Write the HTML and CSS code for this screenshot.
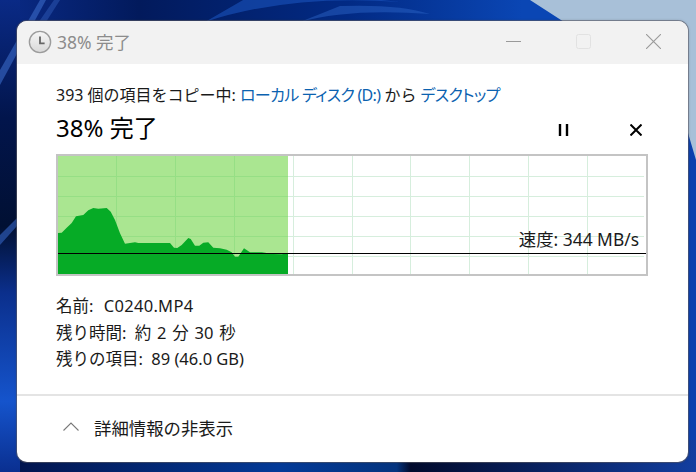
FILE: index.html
```html
<!DOCTYPE html>
<html lang="ja">
<head>
    <meta charset="UTF-8">
    <meta name="viewport" content="width=device-width, initial-scale=1.0">
    <title>38% 完了</title>
    <link rel="stylesheet" href="styles.css">
</head>
<body>
    <!-- wallpaper -->
    <svg class="wallpaper" viewBox="0 0 696 472" preserveAspectRatio="none">
        <defs>
            <linearGradient id="topBlue" x1="0" y1="0" x2="1" y2="0">
                <stop offset="0" stop-color="#0a2a86"/>
                <stop offset="0.2" stop-color="#021a5c"/>
                <stop offset="0.5" stop-color="#022a84"/>
                <stop offset="0.75" stop-color="#0a46b4"/>
                <stop offset="1" stop-color="#0a46b4"/>
            </linearGradient>
            <linearGradient id="bottomBlue" x1="0" y1="0" x2="1" y2="0">
                <stop offset="0" stop-color="#02124a"/>
                <stop offset="0.4" stop-color="#033a98"/>
                <stop offset="0.57" stop-color="#04347f"/>
                <stop offset="0.59" stop-color="#010a2c"/>
                <stop offset="1" stop-color="#123ea0"/>
            </linearGradient>
            <linearGradient id="leftBlue" x1="0" y1="0" x2="0" y2="1">
                <stop offset="0" stop-color="#0a2a86"/>
                <stop offset="0.25" stop-color="#02154c"/>
                <stop offset="0.48" stop-color="#011033"/>
                <stop offset="0.62" stop-color="#0b2f8c"/>
                <stop offset="0.85" stop-color="#1554cc"/>
                <stop offset="1" stop-color="#0a2f90"/>
            </linearGradient>
        </defs>
        <rect width="696" height="472" fill="#0b40ae"/>
        <rect width="696" height="60" fill="url(#topBlue)"/>
        <rect y="440" width="696" height="32" fill="url(#bottomBlue)"/>
        <rect width="20" height="472" fill="url(#leftBlue)"/>
        <path d="M530 0 L561 20 Q640 70 688 133 L696 160 V0 Z" fill="#a8c0d8"/>
        <path d="M205 22 Q290 -6 400 2 L345 -4 H250 Z" fill="#1a54bc" opacity="0.6"/>
        <path d="M300 22 Q350 8 430 14 Q400 4 340 6 Z" fill="#2a62c4" opacity="0.5"/>
        <path d="M0 70 L40 0 H46 L0 85 Z" fill="#3a6ac8" opacity="0.6"/>
        <path d="M18 52 L54 0 H60 L18 66 Z" fill="#3a6ac8" opacity="0.4"/>
        <path d="M0 235 L17 218 V226 L0 245 Z" fill="#2d58b0" opacity="0.7"/>
    </svg>

    <div class="window">
        <div class="titlebar">
            <div class="title">
                <svg class="clock" viewBox="0 0 26 26">
                    <defs>
                        <linearGradient id="clockFace" x1="0" y1="0" x2="0" y2="1">
                            <stop offset="0" stop-color="#f6f6f6"/>
                            <stop offset="1" stop-color="#d8d8d8"/>
                        </linearGradient>
                    </defs>
                    <circle cx="13" cy="13" r="11.5" fill="url(#clockFace)" stroke="#9c9c9c" stroke-width="1.5"/>
                    <path d="M13 7 V14.5 H18" fill="none" stroke="#666" stroke-width="2"/>
                </svg>
                <span>38% 完了</span>
            </div>
            <div class="win-buttons">
                <svg class="win-btn" viewBox="0 0 15 15"><path d="M0 7.5 H15" stroke="#9a9a9a" stroke-width="1"/></svg>
                <svg class="win-btn" viewBox="0 0 15 15"><rect x="0.5" y="0.5" width="14" height="14" rx="2" fill="none" stroke="#e2e2e2" stroke-width="1"/></svg>
                <svg class="win-btn" viewBox="0 0 15 15"><path d="M0 0 L15 15 M15 0 L0 15" stroke="#9a9a9a" stroke-width="1.1"/></svg>
            </div>
        </div>

        <div class="content">
            <p class="copy-line">393 個の項目をコピー中: <a class="link">ローカル ディスク (D:)</a> から <a class="link">デスクトップ</a></p>
            <div class="heading-row">
                <h1>38% 完了</h1>
                <div class="actions">
                    <svg class="action" viewBox="0 0 12 12"><path d="M2 0 V12 M9 0 V12" stroke="#000" stroke-width="2.4"/></svg>
                    <svg class="action" viewBox="0 0 12 12"><path d="M0.5 0.5 L11.5 11.5 M11.5 0.5 L0.5 11.5" stroke="#000" stroke-width="2"/></svg>
                </div>
            </div>

            <div class="graph">
                <svg class="graph-svg" viewBox="0 0 588 118">
                    <rect width="230" height="118" fill="#aae691"/>
                    <g stroke="#d6eedd" stroke-width="1">
                        <path d="M235.5 0 V118 M294.5 0 V118 M352.5 0 V118 M411.5 0 V118 M470.5 0 V118 M529.5 0 V118"/>
                        <path d="M230 20.5 H586 M230 40.5 H586 M230 60.5 H586 M230 80.5 H586 M230 100.5 H586"/>
                    </g>
                    <g stroke="#96df85" stroke-width="1">
                        <path d="M58.5 0 V118 M117.5 0 V118 M176.5 0 V118"/>
                        <path d="M0 20.5 H230 M0 40.5 H230 M0 60.5 H230 M0 80.5 H230 M0 100.5 H230"/>
                    </g>
                    <path fill="#06ab26" d="M0 77 L3.7 76.7 L8.7 71.7 L13.7 67 L18 60.3 L25.3 59 L30.3 54.3 L35.3 52 L40.3 52.7 L48.7 52 L52.7 55.7 L57 64 L62 77.3 L67 87.7 L72 87 L77 86.3 L80.3 87 L112 87 L116 91.7 L119.3 92 L123.7 89 L130.3 82 L132.7 83 L137 89.7 L141.3 89.7 L145.3 86.7 L150.3 86.3 L155.3 91.7 L162 92.3 L168.7 93.7 L173.7 96.3 L177 100.7 L180.3 100.7 L186 92.3 L192 96.3 L203.7 96.3 L215.3 98 L223.7 98.3 L230 97.3 V118 H0 Z"/>
                    <path d="M0 97.5 H588" stroke="#000" stroke-width="1"/>
                </svg>
                <span class="speed">速度: 344 MB/s</span>
            </div>

            <ul class="details">
                <li>名前: <span class="value value-name">C0240.MP4</span></li>
                <li>残り時間: <span class="value value-time">約 2 分 30 秒</span></li>
                <li>残りの項目: <span class="value">89 (46.0 GB)</span></li>
            </ul>
        </div>

        <div class="footer">
            <svg class="chevron" viewBox="0 0 16 9"><path d="M0.5 8.5 L8 1 L15.5 8.5" fill="none" stroke="#7a7a7a" stroke-width="1.1"/></svg>
            <span>詳細情報の非表示</span>
        </div>
    </div>
</body>
</html>
```

FILE: styles.css
```css
html, body {
    margin: 0;
    padding: 0;
    height: 100%;
}

body {
    width: 696px;
    height: 472px;
    overflow: hidden;
    position: relative;
    padding: 21px 8px 10px 17px;
    box-sizing: border-box;
    background-color: #0b40ae;
    font-family: "Noto Sans", "Noto Sans CJK JP", sans-serif;
    font-size: 16px;
    color: #1a1a1a;
}

.wallpaper {
    position: absolute;
    top: 0;
    left: 0;
    width: 696px;
    height: 472px;
}

.window {
    position: relative;
    height: 441px;
    display: flex;
    flex-direction: column;
    background-color: #fff;
    border-radius: 10px;
    box-shadow: 0 0 0 1px rgba(90, 90, 100, 0.55), 0 0 3px rgba(60, 60, 70, 0.5);
    overflow: hidden;
}

.titlebar {
    height: 43px;
    flex: none;
    display: flex;
    align-items: center;
    justify-content: space-between;
    background-color: #f2f2f2;
    color: #8c8c8c;
    font-size: 17.5px;
    padding: 0 27px 2px 11px;
    box-sizing: border-box;
}

.title {
    display: flex;
    align-items: center;
    gap: 5px;
}

.clock {
    width: 24px;
    height: 24px;
}

.win-buttons {
    display: flex;
    gap: 55px;
}

.win-btn {
    width: 15px;
    height: 15px;
}

.content {
    flex: 1;
    padding: 18px 40px 0 39px;
}

.copy-line {
    margin: 0;
    line-height: 27px;
    font-size: 16px;
}

.link {
    color: #0b62b0;
    font-feature-settings: "palt";
    letter-spacing: -0.7px;
}

.heading-row {
    display: flex;
    align-items: center;
    justify-content: space-between;
    height: 34px;
    margin-bottom: 11px;
}

h1 {
    margin: 0;
    font-size: 24px;
    font-weight: normal;
    color: #000;
}

.actions {
    display: flex;
    gap: 60px;
    margin: 8px 6px 0 0;
}

.action {
    width: 12px;
    height: 12px;
}

.graph {
    position: relative;
    width: 588px;
    height: 118px;
    border: 2px solid #c4c4c4;
}

.graph-svg {
    display: block;
    width: 588px;
    height: 118px;
}

.speed {
    position: absolute;
    right: 7px;
    top: 71px;
    line-height: 24px;
    font-size: 17.4px;
}

.details {
    list-style: none;
    margin: 17px 0 0;
    padding: 0;
}

.details li {
    line-height: 26.5px;
    font-size: 16.5px;
}

.value {
    margin-left: 4px;
}

.value-name {
    margin-left: 6px;
    letter-spacing: 0.3px;
}

.value-time {
    word-spacing: 1.5px;
}

.footer {
    height: 68px;
    flex: none;
    display: flex;
    align-items: center;
    gap: 15px;
    padding: 0 0 3px 46px;
    border-top: 2px solid #e4e4e4;
    box-sizing: border-box;
    font-size: 17.4px;
}

.chevron {
    width: 16px;
    height: 9px;
    margin-bottom: 2px;
}
```
